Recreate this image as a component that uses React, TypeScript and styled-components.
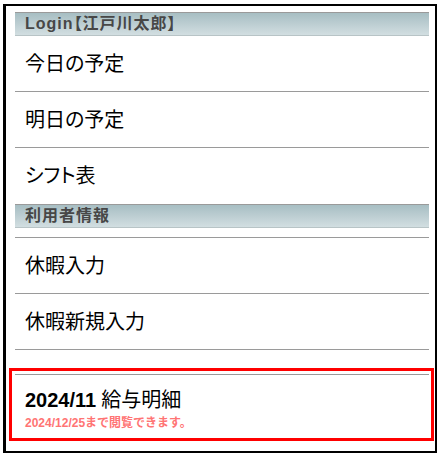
import React from "react";
import styled, { createGlobalStyle } from "styled-components";

const GlobalStyle = createGlobalStyle`
  html, body {
    margin: 0;
    padding: 0;
    background: #ffffff;
  }
  body {
    font-family: "Liberation Sans", "Noto Sans CJK JP", sans-serif;
  }
`;

const Page = styled.div`
  padding: 4px 3px 0 3px;
`;

const Frame = styled.div`
  width: 434px;
  height: 449px;
  box-sizing: border-box;
  border: 2px solid #000;
  border-left-width: 3px;
  padding: 6px 6px 0 9px;
`;

const SectionBar = styled.div`
  height: 24px;
  box-sizing: border-box;
  border-top: 1px solid #9a9a9a;
  border-bottom: 1px solid #b8c4c6;
  background: linear-gradient(to bottom, #a7bec3, #d2dee1);
  padding-left: 10px;
  font-size: 16px;
  font-weight: bold;
  letter-spacing: 1px;
  line-height: 22px;
  color: #474747;
  font-feature-settings: "palt";
`;

const List = styled.ul<{ $gap?: number }>`
  list-style: none;
  margin: ${(p) => (p.$gap ? `${p.$gap}px` : "0")} 0 0 0;
  padding: 0;
  border-top: ${(p) => (p.$gap ? "1px solid #9a9a9a" : "none")};
`;

const Item = styled.li<{ $last?: boolean }>`
  height: 56px;
  box-sizing: border-box;
  display: flex;
  align-items: center;
  padding: 0 0 3px 10px;
  border-bottom: ${(p) => (p.$last ? "none" : "1px solid #9a9a9a")};
  font-size: 20px;
  color: #000;
  font-feature-settings: "palt";
`;

const Highlight = styled.div`
  margin: 18px -5px 0 -6px;
  border: 3px solid #ff0000;
  padding: 3px 2px 0 3px;
`;

const PayItem = styled.div`
  border-top: 1px solid #9a9a9a;
  height: 64px;
  box-sizing: border-box;
  padding: 13px 10px 0 10px;
`;

const PayTitle = styled.div`
  font-size: 20px;
  line-height: 24px;
  color: #000;
`;

const Month = styled.span`
  font-weight: bold;
  margin-right: 5px;
`;

const PayNote = styled.div`
  margin-top: 4px;
  font-size: 12px;
  line-height: 14px;
  font-weight: bold;
  color: #ff7474;
`;

export default function App() {
  return (
    <>
      <GlobalStyle />
      <Page>
        <Frame>
          <SectionBar>Login【江戸川太郎】</SectionBar>
          <List>
            <Item>今日の予定</Item>
            <Item>明日の予定</Item>
            <Item $last>シフト表</Item>
          </List>
          <SectionBar>利用者情報</SectionBar>
          <List $gap={9}>
            <Item>休暇入力</Item>
            <Item>休暇新規入力</Item>
          </List>
          <Highlight>
            <PayItem>
              <PayTitle>
                <Month>2024/11</Month>給与明細
              </PayTitle>
              <PayNote>2024/12/25まで閲覧できます。</PayNote>
            </PayItem>
          </Highlight>
        </Frame>
      </Page>
    </>
  );
}
